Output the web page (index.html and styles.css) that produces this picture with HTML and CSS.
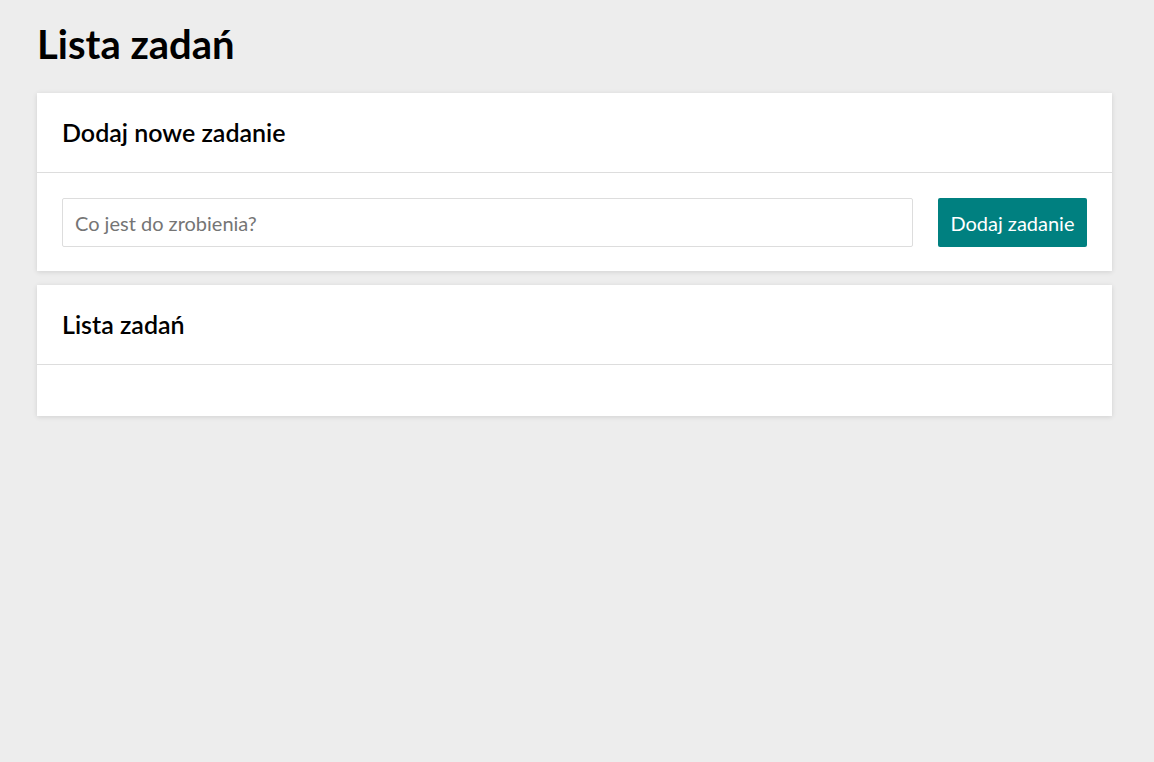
FILE: index.html
```html
<!DOCTYPE html>
<html lang="pl">
<head>
<meta charset="utf-8">
<title>Lista zadań</title>
<link rel="stylesheet" href="styles.css">
</head>
<body>
<div class="page">
  <h1 class="title">Lista zadań</h1>
  <section class="card">
    <header class="card-header"><h2 class="card-title">Dodaj nowe zadanie</h2></header>
    <div class="card-body add-row">
      <input class="task-input" type="text" placeholder="Co jest do zrobienia?">
      <button class="btn" type="button">Dodaj zadanie</button>
    </div>
  </section>
  <section class="card">
    <header class="card-header"><h2 class="card-title">Lista zadań</h2></header>
    <div class="card-body list-body"></div>
  </section>
</div>
</body>
</html>
```
FILE: styles.css
```css
* { box-sizing: border-box; }
html, body { margin: 0; padding: 0; }
body {
  background: #ededed;
  font-family: Lato, "Liberation Sans", sans-serif;
  color: #000;
}
.page {
  padding: 20px 42px 20px 37px;
}
.title {
  margin: 0 0 25px;
  font-size: 40px;
  line-height: 48px;
  font-weight: 700;
}
.card {
  background: #fff;
  box-shadow: 0 1px 5px rgba(0,0,0,0.12);
  margin-bottom: 14px;
}
.card-header {
  padding: 25px;
  border-bottom: 1px solid #dddddd;
}
.card-title {
  margin: 0;
  font-size: 25px;
  line-height: 29px;
  font-weight: 600;
}
.card-body {
  padding: 25px 25px 24px;
}
.add-row {
  display: flex;
  gap: 25px;
}
.task-input {
  flex: 1;
  height: 49px;
  border: 1px solid #dddddd;
  border-radius: 2px;
  padding: 0 12px;
  font-family: inherit;
  font-size: 20px;
  color: #333;
  outline: none;
}
.task-input::placeholder { color: #757575; }
.btn {
  height: 49px;
  padding: 0 12.5px;
  border: 0;
  border-radius: 2px;
  background: #008080;
  color: #fff;
  font-family: inherit;
  font-size: 20px;
}
.list-body {
  height: 51px;
}
```
